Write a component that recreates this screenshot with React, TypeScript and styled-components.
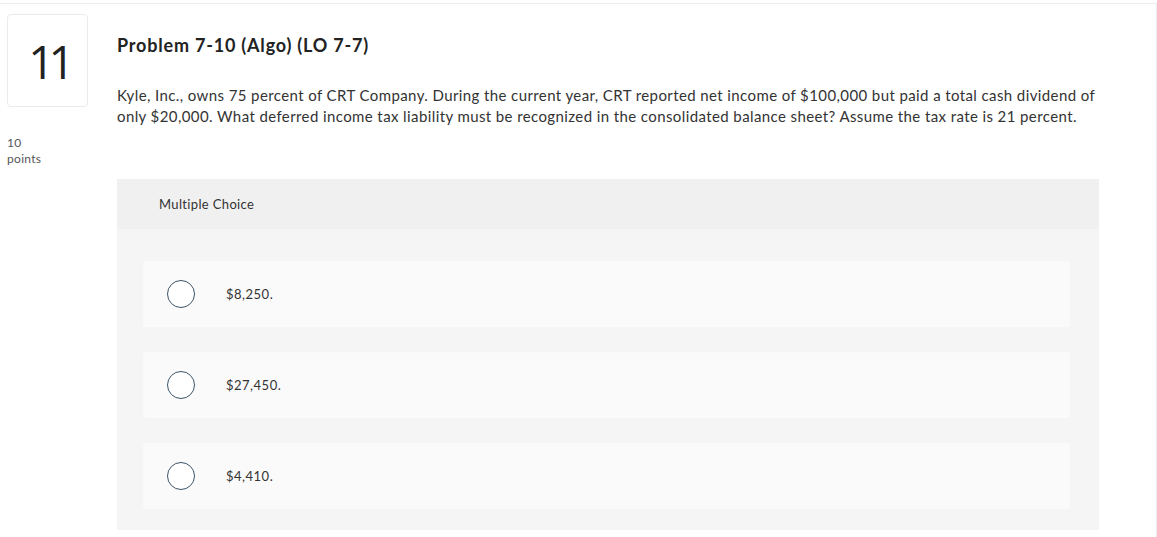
import styled, { createGlobalStyle } from "styled-components";

const GlobalStyle = createGlobalStyle`
  html, body {
    margin: 0;
    padding: 0;
    background: #ffffff;
  }
  body {
    font-family: "Lato", "Open Sans", sans-serif;
    color: #333333;
  }
`;

const Page = styled.div`
  width: 1157px;
  height: 537px;
  box-sizing: border-box;
  border-top: 1px solid #ececec;
  border-right: 1px solid #ececec;
  margin-top: 3px;
  display: flex;
  padding: 10px 0 0 7px;
`;

const Side = styled.aside`
  width: 110px;
  flex-shrink: 0;
`;

const NumberBox = styled.div`
  width: 81px;
  height: 93px;
  box-sizing: border-box;
  border: 1px solid #ebebeb;
  border-radius: 4px;
  display: flex;
  align-items: center;
  justify-content: center;
  padding-left: 2px;
  font-family: "Open Sans", sans-serif;
  font-size: 46px;
  font-weight: 400;
  color: #222;
  letter-spacing: -6px;
`;

const Points = styled.div`
  margin-top: 28px;
  font-size: 12px;
  line-height: 16px;
  letter-spacing: 0.3px;
  color: #555;
`;

const Main = styled.main`
  width: 982px;
`;

const Title = styled.h1`
  margin: 20px 0 0;
  font-size: 18px;
  font-weight: 700;
  line-height: 22px;
  letter-spacing: 0.8px;
  color: #222;
`;

const Body = styled.p`
  margin: 29px 0 0;
  font-size: 15px;
  line-height: 21px;
  letter-spacing: 0.4px;
  color: #333;
`;

const Panel = styled.section`
  margin-top: 52px;
  background: #f5f5f5;
  height: 351px;
`;

const PanelHeader = styled.div`
  height: 50px;
  background: #f0f0f0;
  display: flex;
  align-items: center;
  padding-left: 42px;
  font-size: 13px;
  letter-spacing: 0.35px;
  color: #333;
`;

const Options = styled.div`
  display: flex;
  flex-direction: column;
  gap: 25px;
  padding: 32px 29px 0 26px;
`;

const Option = styled.label`
  height: 66px;
  background: #fafafa;
  border-radius: 3px;
  display: flex;
  align-items: center;
  padding-left: 24px;
  font-size: 13px;
  letter-spacing: 0.5px;
  color: #333;
`;

const Radio = styled.span`
  width: 28px;
  height: 28px;
  box-sizing: border-box;
  border: 1.5px solid #3d5569;
  border-radius: 50%;
  background: #fff;
  margin-right: 31px;
`;

const choices = ["$8,250.", "$27,450.", "$4,410."];

export default function App() {
  return (
    <>
      <GlobalStyle />
      <Page>
        <Side>
          <NumberBox>11</NumberBox>
          <Points>
            10
            <br />
            points
          </Points>
        </Side>
        <Main>
          <Title>Problem 7-10 (Algo) (LO 7-7)</Title>
          <Body>
            Kyle, Inc., owns 75 percent of CRT Company. During the current year,
            CRT reported net income of $100,000 but paid a total cash dividend of
            only $20,000. What deferred income tax liability must be recognized
            in the consolidated balance sheet? Assume the tax rate is 21 percent.
          </Body>
          <Panel>
            <PanelHeader>Multiple Choice</PanelHeader>
            <Options>
              {choices.map((c) => (
                <Option key={c}>
                  <Radio />
                  {c}
                </Option>
              ))}
            </Options>
          </Panel>
        </Main>
      </Page>
    </>
  );
}
